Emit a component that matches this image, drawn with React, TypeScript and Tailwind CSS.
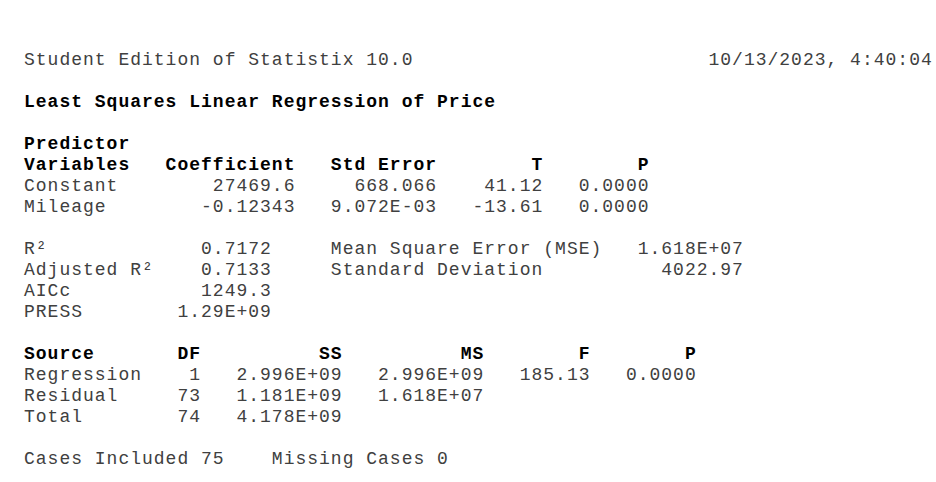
type Cell = [number, string]

// place each piece of text at its character column, like the fixed-width report does
function line(cells: Cell[]) {
  let out = ''
  for (const [col, text] of cells) {
    out = out.padEnd(col, ' ') + text
  }
  return out
}

type Row = { cells: Cell[]; bold?: boolean }

const rows: Row[] = [
  { cells: [[0, 'Student Edition of Statistix 10.0'], [58, '10/13/2023, 4:40:04']] },
  { cells: [] },
  { cells: [[0, 'Least Squares Linear Regression of Price']], bold: true },
  { cells: [] },
  { cells: [[0, 'Predictor']], bold: true },
  {
    cells: [[0, 'Variables'], [12, 'Coefficient'], [26, 'Std Error'], [43, 'T'], [52, 'P']],
    bold: true,
  },
  { cells: [[0, 'Constant'], [16, '27469.6'], [28, '668.066'], [39, '41.12'], [47, '0.0000']] },
  { cells: [[0, 'Mileage'], [15, '-0.12343'], [26, '9.072E-03'], [38, '-13.61'], [47, '0.0000']] },
  { cells: [] },
  { cells: [[0, 'R²'], [15, '0.7172'], [26, 'Mean Square Error (MSE)'], [52, '1.618E+07']] },
  { cells: [[0, 'Adjusted R²'], [15, '0.7133'], [26, 'Standard Deviation'], [54, '4022.97']] },
  { cells: [[0, 'AICc'], [15, '1249.3']] },
  { cells: [[0, 'PRESS'], [13, '1.29E+09']] },
  { cells: [] },
  {
    cells: [[0, 'Source'], [13, 'DF'], [25, 'SS'], [37, 'MS'], [47, 'F'], [56, 'P']],
    bold: true,
  },
  {
    cells: [[0, 'Regression'], [14, '1'], [18, '2.996E+09'], [30, '2.996E+09'], [42, '185.13'], [51, '0.0000']],
  },
  { cells: [[0, 'Residual'], [13, '73'], [18, '1.181E+09'], [30, '1.618E+07']] },
  { cells: [[0, 'Total'], [13, '74'], [18, '4.178E+09']] },
  { cells: [] },
  { cells: [[0, 'Cases Included 75'], [21, 'Missing Cases 0']] },
]

export default function App() {
  return (
    <div className="w-[936px] h-[482px] bg-white overflow-hidden">
      <div className="pt-[50px] pl-6 font-['Liberation_Mono','Courier_New',monospace] text-[18px] tracking-[1px] leading-[21px] text-[#404040]">
        {rows.map((row, i) => (
          <div
            key={i}
            className={row.bold ? 'whitespace-pre h-[21px] font-bold text-black' : 'whitespace-pre h-[21px]'}
          >
            {line(row.cells)}
          </div>
        ))}
      </div>
    </div>
  )
}
